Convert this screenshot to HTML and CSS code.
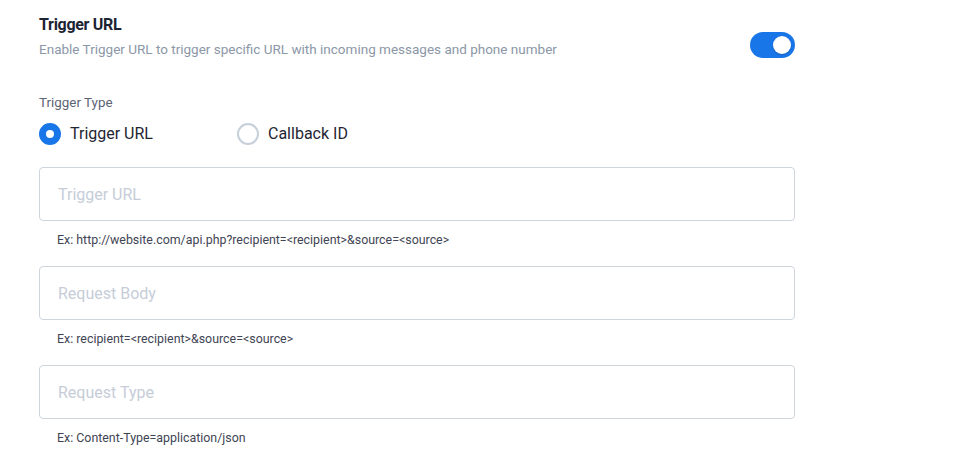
FILE: index.html
```html
<!DOCTYPE html>
<html>
<head>
<meta charset="utf-8">
<link rel="stylesheet" href="styles.css">
</head>
<body>
<div class="panel">
  <div class="header">
    <div class="header-text">
      <div class="title">Trigger URL</div>
      <div class="subtitle">Enable Trigger URL to trigger specific URL with incoming messages and phone number</div>
    </div>
    <div class="toggle"><span class="knob"></span></div>
  </div>

  <div class="label">Trigger Type</div>
  <div class="radios">
    <div class="radio-item"><span class="radio checked"></span><span class="radio-text">Trigger URL</span></div>
    <div class="radio-item"><span class="radio"></span><span class="radio-text">Callback ID</span></div>
  </div>

  <div class="field">
    <div class="input">Trigger URL</div>
    <div class="hint">Ex: http://website.com/api.php?recipient=&lt;recipient&gt;&amp;source=&lt;source&gt;</div>
  </div>
  <div class="field">
    <div class="input">Request Body</div>
    <div class="hint">Ex: recipient=&lt;recipient&gt;&amp;source=&lt;source&gt;</div>
  </div>
  <div class="field">
    <div class="input">Request Type</div>
    <div class="hint">Ex: Content-Type=application/json</div>
  </div>
</div>
</body>
</html>
```
FILE: styles.css
```css
* { box-sizing: border-box; }
body {
  margin: 0;
  background: #fff;
  font-family: Roboto, "Noto Sans", sans-serif;
}
.panel {
  width: 795px;
  padding: 15px 0 0 39px;
}
.header {
  display: flex;
  justify-content: space-between;
  align-items: flex-end;
}
.title {
  font-size: 16px;
  font-weight: 700;
  line-height: 20px;
  color: #1c2333;
  letter-spacing: -0.3px;
}
.subtitle {
  margin-top: 4px;
  font-size: 13.5px;
  line-height: 20px;
  color: #8c97a7;
}
.toggle {
  width: 45px;
  height: 26px;
  border-radius: 13px;
  background: #1976e9;
  display: flex;
  align-items: center;
  justify-content: flex-end;
  padding-right: 4px;
  margin-bottom: 1px;
}
.knob {
  width: 18px;
  height: 18px;
  border-radius: 50%;
  background: #fff;
  box-shadow: 0 1px 2px rgba(0,0,0,0.2);
}
.label {
  margin-top: 34px;
  font-size: 13.4px;
  line-height: 20px;
  color: #5b6473;
}
.radios {
  margin-top: 10px;
  display: flex;
}
.radio-item {
  display: flex;
  align-items: center;
  width: 198px;
}
.radio {
  width: 22px;
  height: 22px;
  border-radius: 50%;
  border: 2px solid #c7cfda;
  flex: none;
}
.radio.checked {
  border: 7px solid #1976e9;
  background: #fff;
}
.radio-text {
  margin-left: 9px;
  font-size: 16px;
  line-height: 22px;
  color: #1f2533;
}
.field {
  margin-top: 22px;
}
.field + .field {
  margin-top: 18px;
}
.input {
  height: 54px;
  border: 1px solid #cfd5de;
  border-radius: 4px;
  padding-left: 18px;
  display: flex;
  align-items: center;
  font-size: 16px;
  color: #c6cdd8;
}
.hint {
  margin-top: 11px;
  padding-left: 18px;
  font-size: 12.4px;
  line-height: 16px;
  color: #3f4554;
}
```
